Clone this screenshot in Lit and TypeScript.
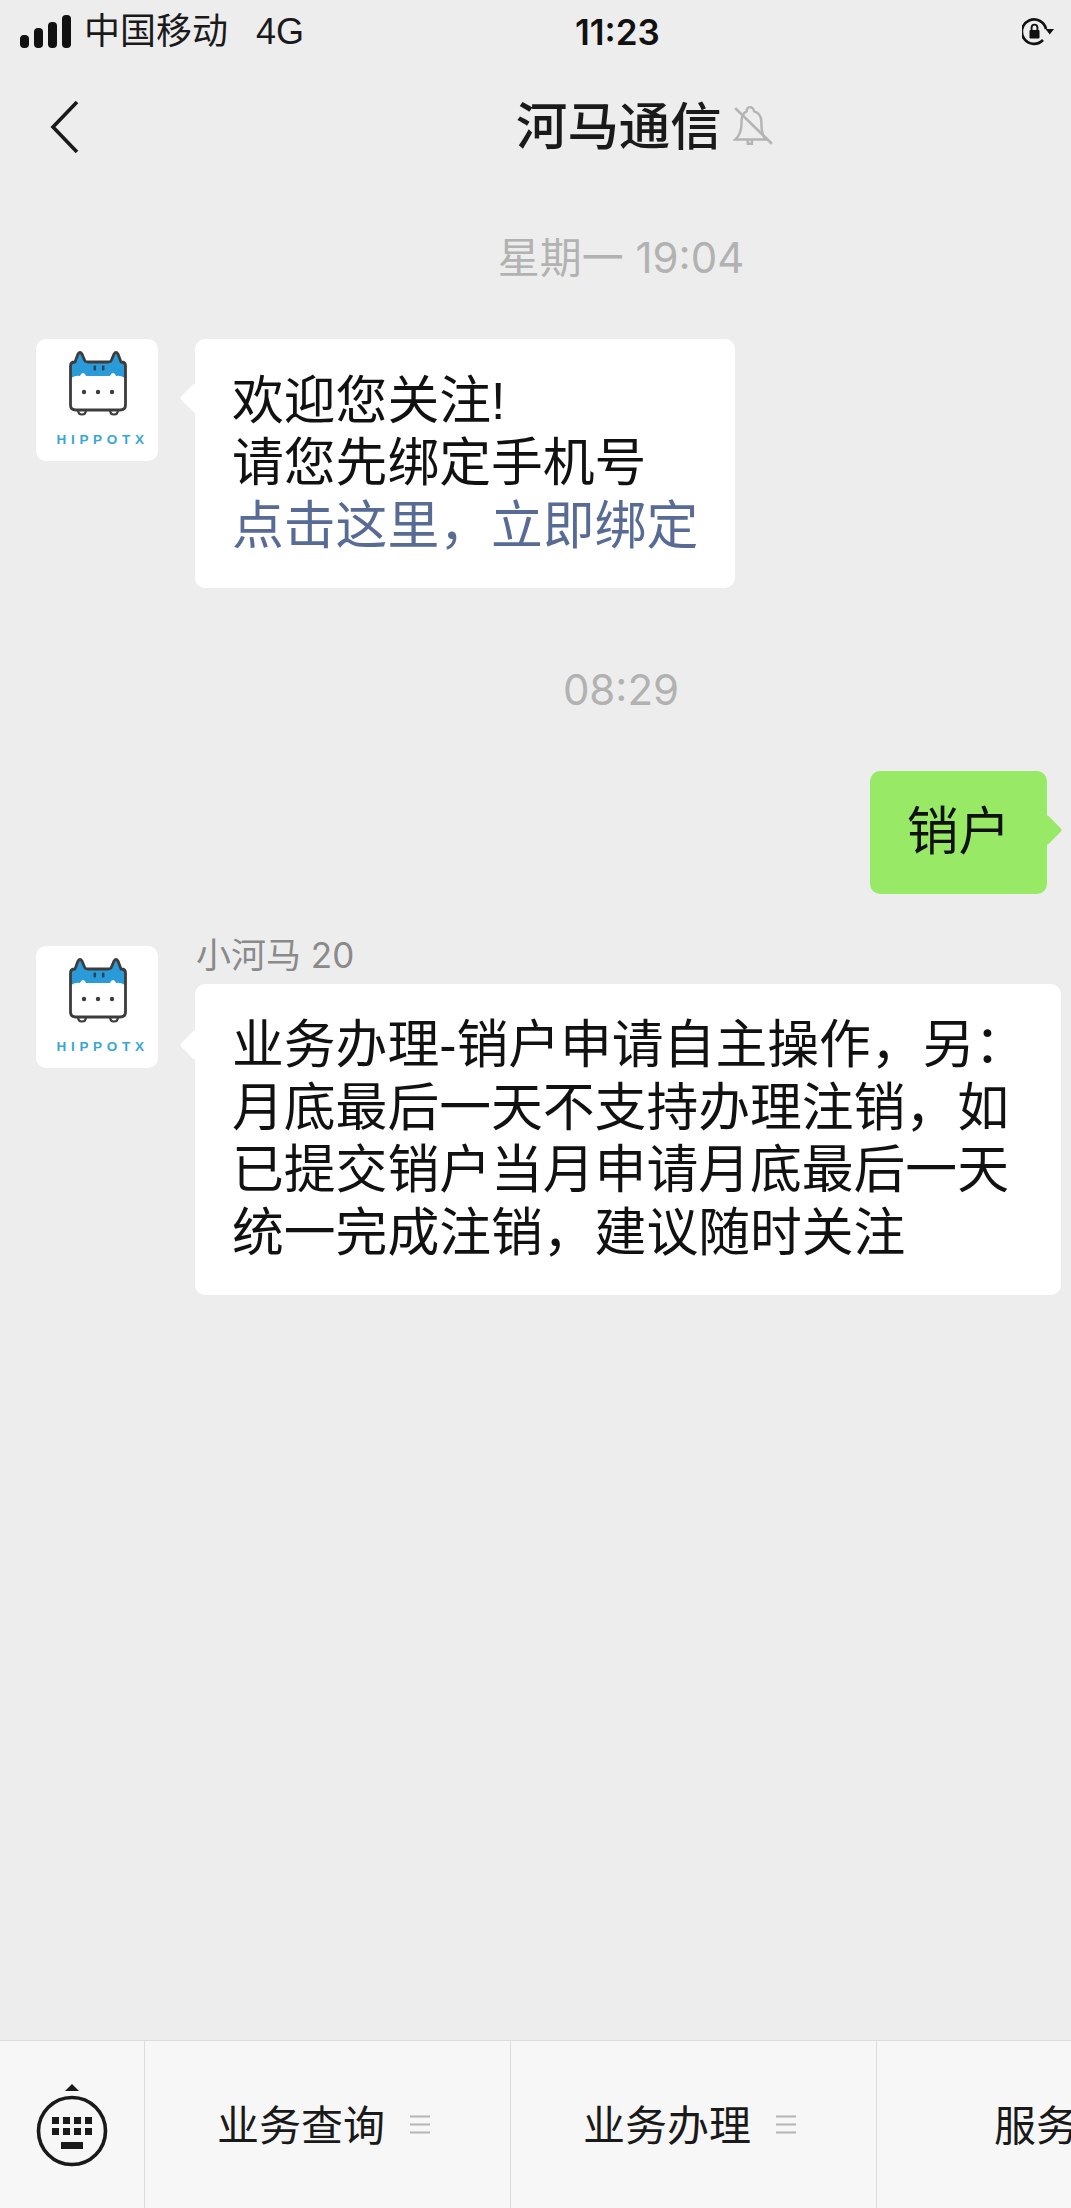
import {LitElement, html, css} from 'lit';
import {customElement} from 'lit/decorators.js';

const avatar = html`
  <svg class="avatar" viewBox="0 0 122 122">
    <rect width="122" height="122" rx="10" fill="#fff"/>
    <path d="M35 39 V27 Q35 23 39 23 L42 15 Q44 12 46 15 L48.5 21 Q49 23 52 23 H72 Q75 23 75.5 21 L78 15 Q80 12 82 15 L85 23 Q89 23 89 27 V39 Q84 36 80 37 Q79 34 77 34 Q75 34 74 37 H50 Q49 34 47 34 Q45 34 44 37 Q40 36 35 39 Z" fill="#2a9bd8"/>
    <path d="M42 71 Q42 75.5 46 75.5 Q50 75.5 50 71 M74 71 Q74 75.5 78 75.5 Q82 75.5 82 71" fill="#fff" stroke="#3c3c3c" stroke-width="2.2"/>
    <path d="M34.5 39 V27 Q34.5 23 39 23 L42 15 Q44 12 46 15 L48.5 21 Q49 23 52 23 H72 Q75 23 75.5 21 L78 15 Q80 12 82 15 L85 23 Q89.5 23 89.5 27 V66 Q89.5 71 84 71 H40 Q34.5 71 34.5 66 Z" fill="none" stroke="#3c3c3c" stroke-width="2.8" stroke-linejoin="round"/>
    <rect x="57.5" y="26.5" width="2.6" height="5" rx="1" fill="#23465c"/>
    <rect x="65.9" y="26.5" width="2.6" height="5" rx="1" fill="#23465c"/>
    <circle cx="48" cy="53" r="2.2" fill="#3c3c3c"/>
    <circle cx="62" cy="53" r="2.2" fill="#3c3c3c"/>
    <circle cx="76" cy="53" r="2.2" fill="#3c3c3c"/>
    <text x="20.5" y="105" class="brand">HIPPOTX</text>
  </svg>
`;

const menuLines = html`
  <svg class="lines" viewBox="0 0 20 20">
    <path d="M0 1.5 H20 M0 9.5 H20 M0 17.5 H20" stroke="#b4b4b4" stroke-width="2"/>
  </svg>
`;

@customElement('app-root')
class AppRoot extends LitElement {
  static styles = css`
    :host {
      display: flex;
      flex-direction: column;
      width: 1071px;
      height: 2208px;
      overflow: hidden;
      background: #ededed;
      color: #111;
      font-family: "Liberation Sans", "Noto Sans CJK SC", sans-serif;
    }

    .status {
      display: flex;
      align-items: center;
      height: 64px;
      padding-bottom: 2px;
      flex: none;
      font-size: 36px;
      line-height: 40px;
      padding-left: 20px;
    }
    .signal { width: 52px; height: 33px; flex: none; margin-bottom: 2px; }
    .carrier { margin-left: 12px; width: 172px; color: #1a1a1a; }
    .net { width: 319px; color: #1a1a1a; }
    .clock {
      width: 447px;
      font-family: Inter, sans-serif;
      font-weight: 600;
      font-size: 35px;
    }
    .lock { width: 34px; height: 30px; flex: none; }

    .nav {
      display: flex;
      align-items: center;
      height: 122px;
      flex: none;
      padding-left: 50px;
    }
    .back { width: 30px; height: 56px; flex: none; }
    .title {
      margin-left: 436px;
      font-size: 51.4px;
      line-height: 60px;
      font-weight: 500;
      color: #1a1a1a;
    }
    .bell { width: 40px; height: 44px; margin-left: 11px; flex: none; }

    .chat {
      flex: 1;
      display: flex;
      flex-direction: column;
    }
    .time {
      height: 50px;
      line-height: 50px;
      padding-left: 171px;
      text-align: center;
      font-family: Inter, "Noto Sans CJK SC", sans-serif;
      font-size: 42px;
      color: #b2b2b2;
    }
    .time.first { margin-top: 45px; }
    .time.second { margin-top: 77px; }

    .row {
      display: flex;
      align-items: flex-start;
      padding-left: 36px;
      gap: 37px;
    }
    .row.welcome { margin-top: 56px; }
    .row.reply { margin-top: 43px; }
    .avatar { width: 122px; height: 122px; flex: none; }
    .reply .avatar { margin-top: 9px; }
    .brand {
      font-family: "Liberation Sans", sans-serif;
      font-size: 13.5px;
      font-weight: 700;
      letter-spacing: 4.7px;
      fill: #38a7d6;
    }

    .bubble {
      position: relative;
      padding: 30.5px 37px;
      background: #fff;
      border-radius: 10px;
      font-size: 51.8px;
      line-height: 62.5px;
      white-space: nowrap;
    }
    .bubble::before {
      content: "";
      position: absolute;
      left: -11px;
      top: 48px;
      width: 22px;
      height: 22px;
      background: inherit;
      border-radius: 3px;
      transform: rotate(45deg);
    }
    .link { color: #576b95; }

    .mine {
      display: flex;
      justify-content: flex-end;
      margin-top: 56px;
      padding-right: 24px;
    }
    .green {
      background: #98e965;
      width: 177px;
      height: 123px;
      box-sizing: border-box;
      padding: 30px 0 0 0;
      text-align: center;
    }
    .green::before {
      left: auto;
      right: -11px;
    }

    .sender {
      font-family: Inter, "Noto Sans CJK SC", sans-serif;
      font-size: 35px;
      line-height: 36px;
      color: #8a8a8a;
      margin-bottom: 11px;
      padding-left: 1px;
    }
    .reply .bubble { width: 866px; box-sizing: border-box; }
    .reply .bubble::before { top: 50px; }

    .menu {
      display: flex;
      flex: none;
      height: 167px;
      border-top: 1px solid #dcdcdc;
      background: #f7f7f7;
    }
    .keys {
      width: 145px;
      flex: none;
      display: flex;
      justify-content: center;
      padding-top: 43px;
      box-sizing: border-box;
      border-right: 1px solid #dcdcdc;
    }
    .keys svg { width: 72px; height: 86px; }
    .item {
      width: 366px;
      flex: none;
      box-sizing: border-box;
      display: flex;
      align-items: flex-start;
      justify-content: center;
      padding: 60px 8px 0 0;
      gap: 25px;
      font-size: 42px;
      line-height: 52px;
      color: #1a1a1a;
      border-right: 1px solid #dcdcdc;
    }
    .item:last-child { padding-right: 2px; }
    .lines { width: 20px; height: 20px; margin-top: 14px; flex: none; }
  `;

  render() {
    return html`
      <div class="status">
        <svg class="signal" viewBox="0 0 52 33">
          <rect x="0" y="20" width="9" height="13" rx="4" fill="#111"/>
          <rect x="14" y="13" width="9" height="20" rx="4" fill="#111"/>
          <rect x="28" y="7" width="9" height="26" rx="4" fill="#111"/>
          <rect x="42" y="0" width="9" height="33" rx="4" fill="#111"/>
        </svg>
        <span class="carrier">中国移动</span>
        <span class="net">4G</span>
        <span class="clock">11:23</span>
        <svg class="lock" viewBox="0 0 34 30">
          <path d="M24 12 A12.2 12.2 0 1 0 21 23" fill="none" stroke="#111" stroke-width="2.6"/>
          <path d="M23.5 12 H32 L27.7 17.5 Z" fill="#111"/>
          <rect x="7.5" y="13" width="10" height="8.5" rx="1" fill="#111"/>
          <path d="M9.6 13 V10.5 A2.9 2.9 0 0 1 15.4 10.5 V13" fill="none" stroke="#111" stroke-width="1.9"/>
        </svg>
      </div>

      <div class="nav">
        <svg class="back" viewBox="0 0 30 56">
          <path d="M27 3 L3 28 L27 53" fill="none" stroke="#1a1a1a" stroke-width="3.6"/>
        </svg>
        <span class="title">河马通信</span>
        <svg class="bell" viewBox="0 0 38 42">
          <path d="M2 33 Q8 28 8 18 V16 Q8 8 13 6 Q13 2 16 2 Q19 2 20 6 Q27 8 27 16 V18 Q27 28 31 33 Z M14 33 V37 H18 V33" fill="none" stroke="#b4b4b4" stroke-width="2.3"/>
          <path d="M2 3 L37 37" stroke="#b4b4b4" stroke-width="2.6"/>
        </svg>
      </div>

      <div class="chat">
        <div class="time first">星期一 19:04</div>
        <div class="row welcome">
          ${avatar}
          <div class="bubble">欢迎您关注!<br>请您先绑定手机号<br><span class="link">点击这里，立即绑定</span></div>
        </div>

        <div class="time second">08:29</div>
        <div class="mine">
          <div class="bubble green">销户</div>
        </div>

        <div class="row reply">
          ${avatar}
          <div>
            <div class="sender">小河马 20</div>
            <div class="bubble">业务办理-销户申请自主操作，另：<br>月底最后一天不支持办理注销，如<br>已提交销户当月申请月底最后一天<br>统一完成注销，建议随时关注</div>
          </div>
        </div>
      </div>

      <div class="menu">
        <div class="keys">
          <svg viewBox="0 0 72 86">
            <path d="M29 7 L36 0 L43 7 Z" fill="#1a1a1a"/>
            <circle cx="36" cy="47" r="33.5" fill="none" stroke="#1a1a1a" stroke-width="3.6"/>
            <path d="M16 33 h7 v7 h-7 z M27 33 h7 v7 h-7 z M38 33 h7 v7 h-7 z M49 33 h7 v7 h-7 z M16 44 h7 v7 h-7 z M27 44 h7 v7 h-7 z M38 44 h7 v7 h-7 z M49 44 h7 v7 h-7 z M25 58 h22 v7 h-22 z" fill="#1a1a1a"/>
          </svg>
        </div>
        <div class="item">业务查询${menuLines}</div>
        <div class="item">业务办理${menuLines}</div>
        <div class="item">服务${menuLines}</div>
      </div>
    `;
  }
}
